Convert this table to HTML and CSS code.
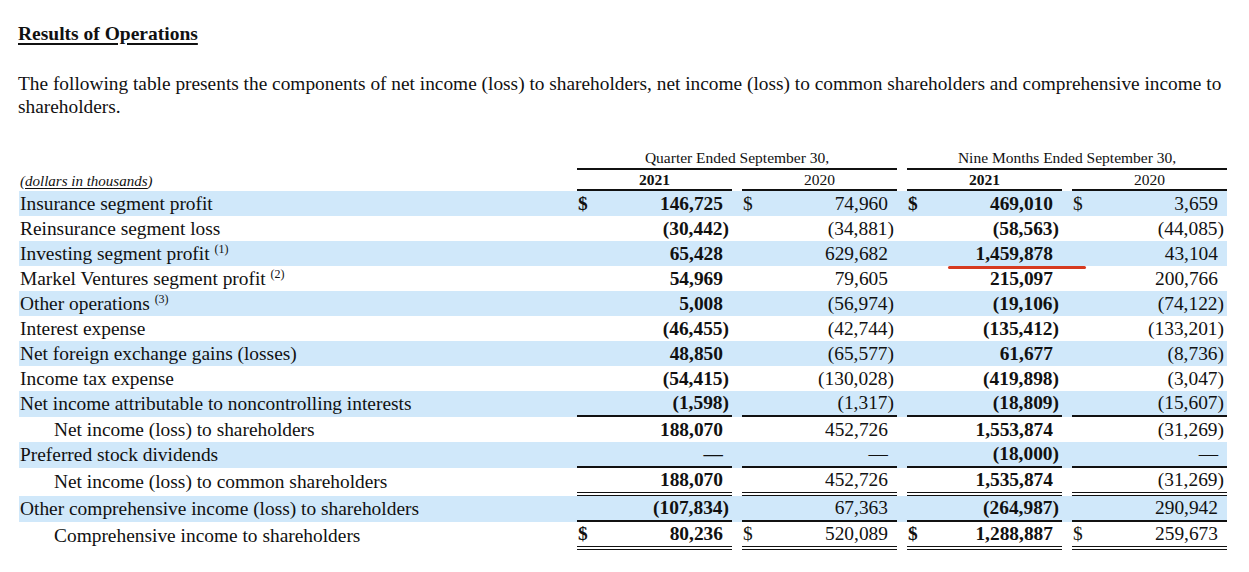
FILE: index.html
```html
<!DOCTYPE html>
<html lang="en">
<head>
<meta charset="utf-8">
<title>Results of Operations</title>
<link rel="stylesheet" href="styles.css">
</head>
<body>
<h1 class="title">Results of Operations</h1>
<p class="intro">The following table presents the components of net income (loss) to shareholders, net income (loss) to common shareholders and comprehensive income to shareholders.</p>
<table class="fin">
  <colgroup>
    <col class="c-label"><col class="c-val"><col class="c-gap"><col class="c-val"><col class="c-gap"><col class="c-val"><col class="c-gap"><col class="c-val">
  </colgroup>
  <thead>
    <tr class="h1">
      <td></td>
      <td colspan="3" class="period">Quarter Ended September 30,</td>
      <td></td>
      <td colspan="3" class="period">Nine Months Ended September 30,</td>
    </tr>
    <tr class="h2">
      <td class="unit">(<u>dollars in thousands</u>)</td>
      <td class="yr b">2021</td><td></td>
      <td class="yr">2020</td><td></td>
      <td class="yr b">2021</td><td></td>
      <td class="yr">2020</td>
    </tr>
  </thead>
  <tbody>
    <tr class="hl">
      <td class="lbl"><div class="lc">Insurance segment profit</div></td>
      <td class="v b"><div class="cell"><span class="cur">$</span><span class="n">146,725</span></div></td><td></td>
      <td class="v"><div class="cell"><span class="cur">$</span><span class="n">74,960</span></div></td><td></td>
      <td class="v b"><div class="cell"><span class="cur">$</span><span class="n">469,010</span></div></td><td></td>
      <td class="v"><div class="cell"><span class="cur">$</span><span class="n">3,659</span></div></td>
    </tr>
    <tr>
      <td class="lbl"><div class="lc">Reinsurance segment loss</div></td>
      <td class="v b"><div class="cell"><span class="n neg">(30,442)</span></div></td><td></td>
      <td class="v"><div class="cell"><span class="n neg">(34,881)</span></div></td><td></td>
      <td class="v b"><div class="cell"><span class="n neg">(58,563)</span></div></td><td></td>
      <td class="v"><div class="cell"><span class="n neg">(44,085)</span></div></td>
    </tr>
    <tr class="hl">
      <td class="lbl"><div class="lc">Investing segment profit <sup>(1)</sup></div></td>
      <td class="v b"><div class="cell"><span class="n">65,428</span></div></td><td></td>
      <td class="v"><div class="cell"><span class="n">629,682</span></div></td><td></td>
      <td class="v b marked"><div class="cell"><span class="n">1,459,878</span></div><span class="redline"></span></td><td></td>
      <td class="v"><div class="cell"><span class="n">43,104</span></div></td>
    </tr>
    <tr>
      <td class="lbl"><div class="lc">Markel Ventures segment profit <sup>(2)</sup></div></td>
      <td class="v b"><div class="cell"><span class="n">54,969</span></div></td><td></td>
      <td class="v"><div class="cell"><span class="n">79,605</span></div></td><td></td>
      <td class="v b"><div class="cell"><span class="n">215,097</span></div></td><td></td>
      <td class="v"><div class="cell"><span class="n">200,766</span></div></td>
    </tr>
    <tr class="hl">
      <td class="lbl"><div class="lc">Other operations <sup>(3)</sup></div></td>
      <td class="v b"><div class="cell"><span class="n">5,008</span></div></td><td></td>
      <td class="v"><div class="cell"><span class="n neg">(56,974)</span></div></td><td></td>
      <td class="v b"><div class="cell"><span class="n neg">(19,106)</span></div></td><td></td>
      <td class="v"><div class="cell"><span class="n neg">(74,122)</span></div></td>
    </tr>
    <tr>
      <td class="lbl"><div class="lc">Interest expense</div></td>
      <td class="v b"><div class="cell"><span class="n neg">(46,455)</span></div></td><td></td>
      <td class="v"><div class="cell"><span class="n neg">(42,744)</span></div></td><td></td>
      <td class="v b"><div class="cell"><span class="n neg">(135,412)</span></div></td><td></td>
      <td class="v"><div class="cell"><span class="n neg">(133,201)</span></div></td>
    </tr>
    <tr class="hl">
      <td class="lbl"><div class="lc">Net foreign exchange gains (losses)</div></td>
      <td class="v b"><div class="cell"><span class="n">48,850</span></div></td><td></td>
      <td class="v"><div class="cell"><span class="n neg">(65,577)</span></div></td><td></td>
      <td class="v b"><div class="cell"><span class="n">61,677</span></div></td><td></td>
      <td class="v"><div class="cell"><span class="n neg">(8,736)</span></div></td>
    </tr>
    <tr>
      <td class="lbl"><div class="lc">Income tax expense</div></td>
      <td class="v b"><div class="cell"><span class="n neg">(54,415)</span></div></td><td></td>
      <td class="v"><div class="cell"><span class="n neg">(130,028)</span></div></td><td></td>
      <td class="v b"><div class="cell"><span class="n neg">(419,898)</span></div></td><td></td>
      <td class="v"><div class="cell"><span class="n neg">(3,047)</span></div></td>
    </tr>
    <tr class="hl rule">
      <td class="lbl"><div class="lc">Net income attributable to noncontrolling interests</div></td>
      <td class="v b"><div class="cell"><span class="n neg">(1,598)</span></div></td><td></td>
      <td class="v"><div class="cell"><span class="n neg">(1,317)</span></div></td><td></td>
      <td class="v b"><div class="cell"><span class="n neg">(18,809)</span></div></td><td></td>
      <td class="v"><div class="cell"><span class="n neg">(15,607)</span></div></td>
    </tr>
    <tr>
      <td class="lbl ind"><div class="lc">Net income (loss) to shareholders</div></td>
      <td class="v b"><div class="cell"><span class="n">188,070</span></div></td><td></td>
      <td class="v"><div class="cell"><span class="n">452,726</span></div></td><td></td>
      <td class="v b"><div class="cell"><span class="n">1,553,874</span></div></td><td></td>
      <td class="v"><div class="cell"><span class="n neg">(31,269)</span></div></td>
    </tr>
    <tr class="hl rule">
      <td class="lbl"><div class="lc">Preferred stock dividends</div></td>
      <td class="v b"><div class="cell"><span class="n">—</span></div></td><td></td>
      <td class="v"><div class="cell"><span class="n">—</span></div></td><td></td>
      <td class="v b"><div class="cell"><span class="n neg">(18,000)</span></div></td><td></td>
      <td class="v"><div class="cell"><span class="n">—</span></div></td>
    </tr>
    <tr class="dbl">
      <td class="lbl ind"><div class="lc">Net income (loss) to common shareholders</div></td>
      <td class="v b"><div class="cell"><span class="n">188,070</span></div></td><td></td>
      <td class="v"><div class="cell"><span class="n">452,726</span></div></td><td></td>
      <td class="v b"><div class="cell"><span class="n">1,535,874</span></div></td><td></td>
      <td class="v"><div class="cell"><span class="n neg">(31,269)</span></div></td>
    </tr>
    <tr class="hl rule">
      <td class="lbl"><div class="lc">Other comprehensive income (loss) to shareholders</div></td>
      <td class="v b"><div class="cell"><span class="n neg">(107,834)</span></div></td><td></td>
      <td class="v"><div class="cell"><span class="n">67,363</span></div></td><td></td>
      <td class="v b"><div class="cell"><span class="n neg">(264,987)</span></div></td><td></td>
      <td class="v"><div class="cell"><span class="n">290,942</span></div></td>
    </tr>
    <tr class="dbl">
      <td class="lbl ind"><div class="lc">Comprehensive income to shareholders</div></td>
      <td class="v b"><div class="cell"><span class="cur">$</span><span class="n">80,236</span></div></td><td></td>
      <td class="v"><div class="cell"><span class="cur">$</span><span class="n">520,089</span></div></td><td></td>
      <td class="v b"><div class="cell"><span class="cur">$</span><span class="n">1,288,887</span></div></td><td></td>
      <td class="v"><div class="cell"><span class="cur">$</span><span class="n">259,673</span></div></td>
    </tr>
  </tbody>
</table>
</body>
</html>
```

FILE: styles.css
```css
html, body {
  background: #ffffff;
}

body {
  margin: 0;
  padding: 0 18px 0 18px;
  font-family: "Liberation Serif", "Times New Roman", serif;
  color: #111111;
}

.title {
  margin: 23px 0 0;
  font-size: 19.5px;
  line-height: 22px;
  font-weight: bold;
  text-decoration: underline;
  text-decoration-thickness: 2px;
  text-underline-offset: 3px;
}

.intro {
  margin: 28px 0 0;
  font-size: 19.35px;
  line-height: 22.5px;
}

.fin {
  margin: 29px 0 0 1px;
  width: 1208px;
  table-layout: fixed;
  border-collapse: separate;
  border-spacing: 0;
  font-size: 19.4px;
  line-height: 20px;
}

.c-label { width: 558px; }
.c-val { width: 155px; }
.c-gap { width: 10px; }

.fin td {
  padding: 0;
  vertical-align: middle;
  white-space: nowrap;
}

.h1 td {
  line-height: 21px;
}

.period {
  font-size: 15.5px;
  text-align: center;
  border-bottom: 2px solid #111;
}

.h2 td {
  line-height: 19px;
}

.unit {
  font-size: 15px;
  font-style: italic;
  padding-left: 1px !important;
  vertical-align: bottom !important;
}

.unit u {
  text-underline-offset: 2px;
}

.yr {
  font-size: 15.5px;
  text-align: center;
  border-bottom: 2px solid #111;
}

.b {
  font-weight: bold;
}

.hl td {
  background: #d0e8fa;
}

.lc {
  height: 25px;
  line-height: 25px;
  padding-left: 1px;
}

.rule .lc,
.dbl .lc {
  height: 24px;
  line-height: 24px;
}

.ind .lc {
  padding-left: 35px;
}

.lbl sup {
  font-size: 12px;
  line-height: 0;
  vertical-align: 7px;
}

.cell {
  height: 25px;
  display: flex;
  align-items: center;
  padding: 0 3px 0 1px;
}

.rule .cell,
.dbl .cell {
  height: 24px;
}

.cur {
  margin-right: auto;
}

.n {
  margin-left: auto;
  padding-right: 6px;
}

.n.neg {
  padding-right: 0;
}

.rule td.v {
  border-bottom: 2px solid #111;
}

.dbl td.v {
  border-bottom: 4px double #111;
}

.marked {
  position: relative;
}

.redline {
  position: absolute;
  left: 41px;
  bottom: -3px;
  width: 138px;
  height: 3px;
  border-radius: 2px;
  background: #d63a20;
}
```
